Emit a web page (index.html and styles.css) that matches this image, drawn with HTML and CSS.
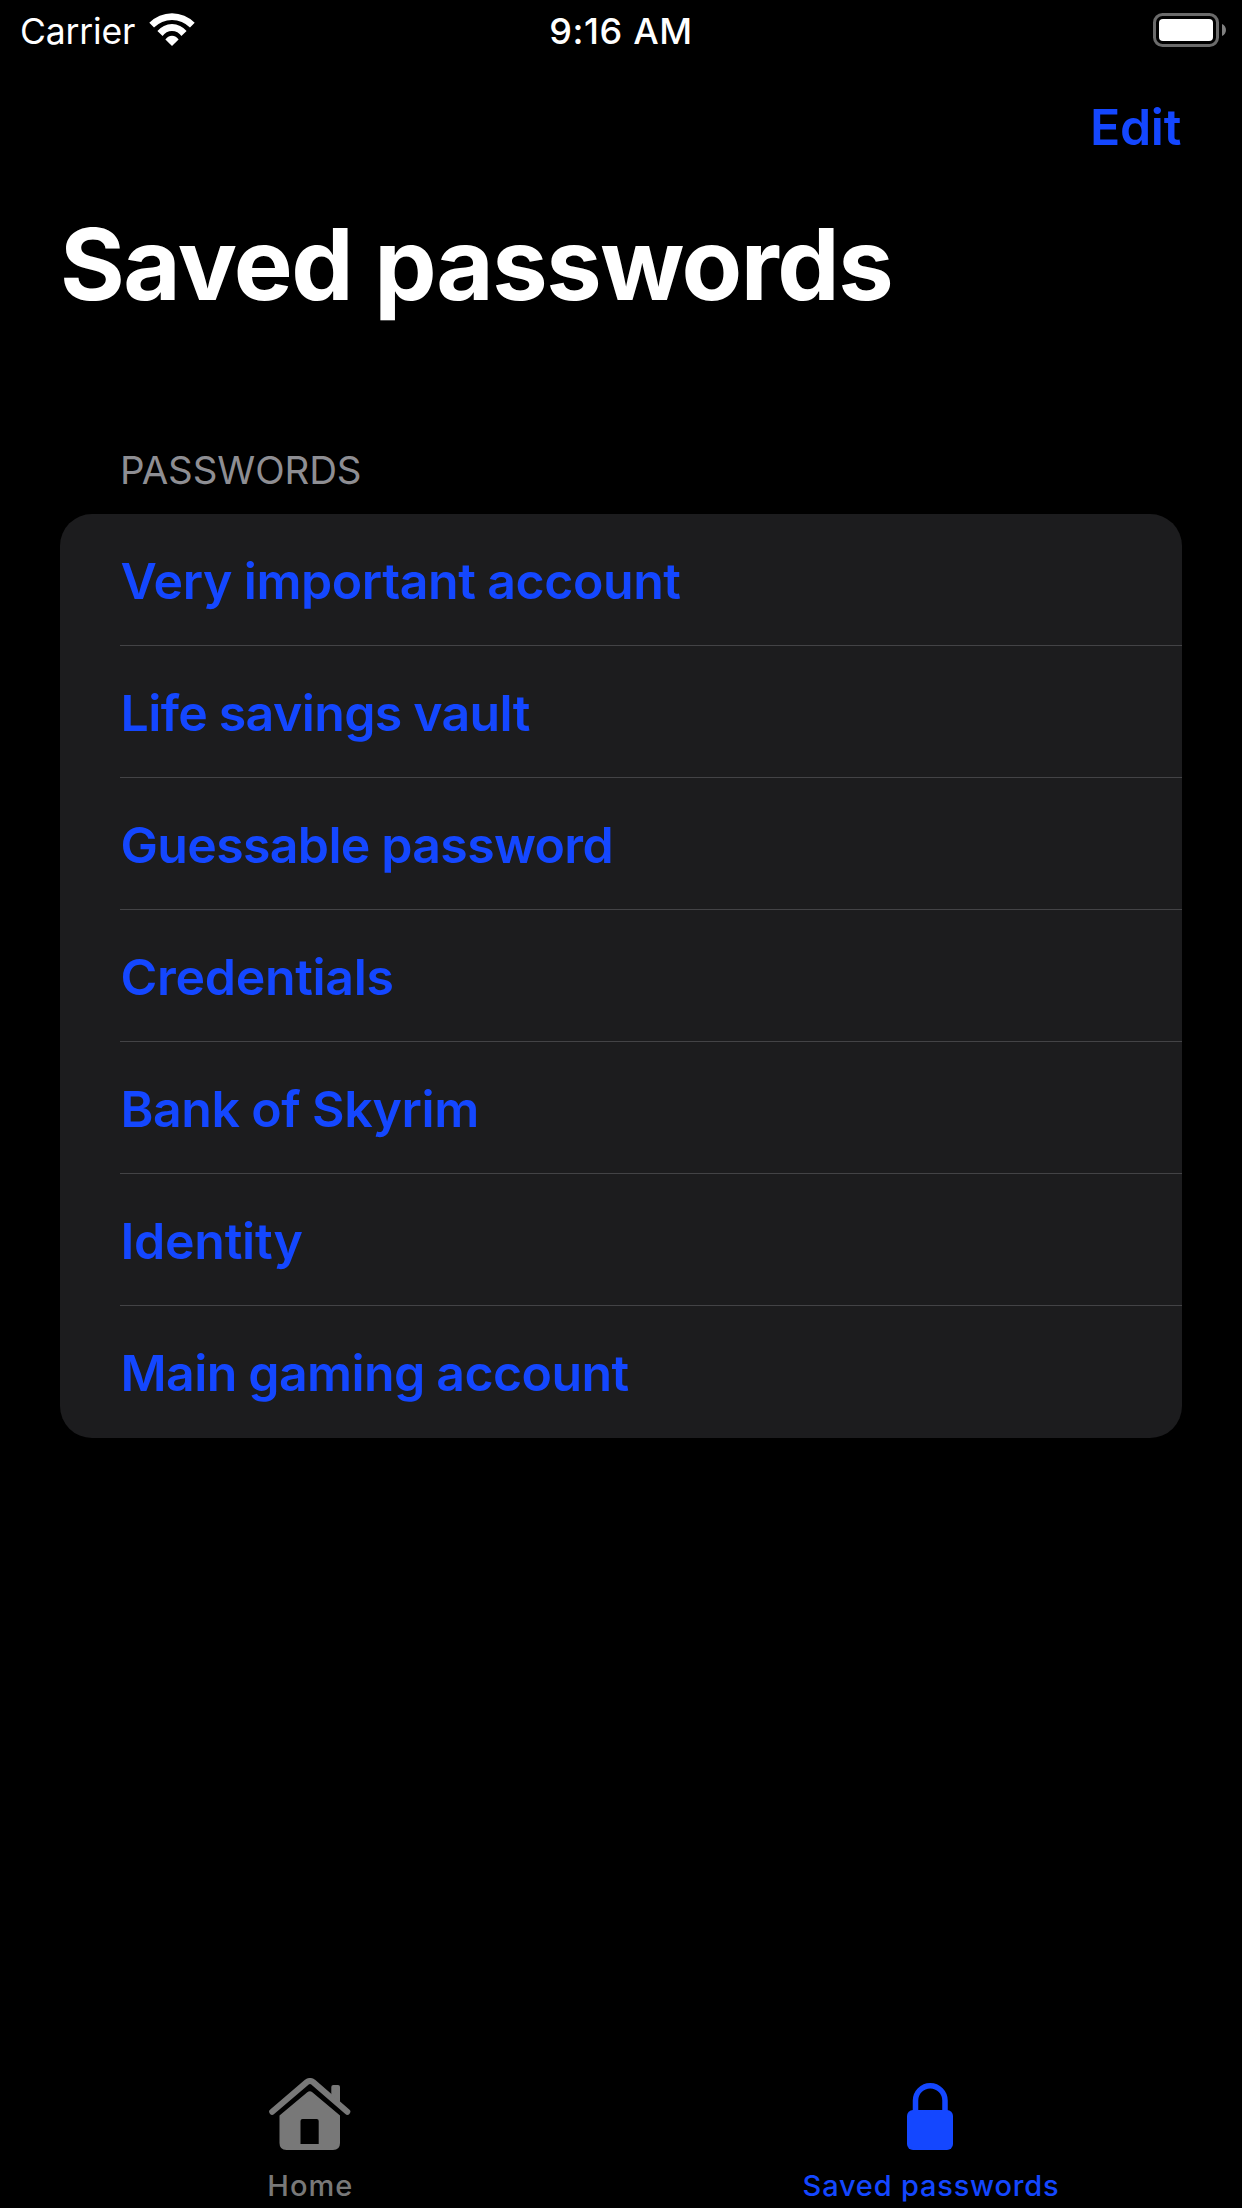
FILE: index.html
```html
<!DOCTYPE html>
<html lang="en">
<head>
<meta charset="utf-8">
<title>Saved passwords</title>
<link rel="stylesheet" href="styles.css">
</head>
<body>
<div class="screen">
  <header class="status">
    <div class="status-left">
      <span class="carrier">Carrier</span>
      <svg class="wifi" width="46" height="34" viewBox="0 0 46 34" fill="#fff">
        <path d="M0.3 9.8A31.6 31.6 0 0 1 45.7 9.8L41 14.500A25.300 25.300 0 0 0 5 14.500Z"/>
        <path d="M8.400 18A18.900 18.900 0 0 1 37.600 18L32.400 23.100A11.100 11.100 0 0 0 13.600 23.100Z"/>
        <path d="M16.400 26.400A7.900 7.900 0 0 1 29.600 26.400L23 33Z"/>
      </svg>
    </div>
    <span class="clock">9:16 AM</span>
    <div class="status-right">
      <svg class="battery" width="73" height="34" viewBox="0 0 73 34">
        <rect x="1.5" y="1.5" width="63" height="31" rx="8" fill="none" stroke="#6b6b6b" stroke-width="3"/>
        <rect x="6" y="6" width="54" height="22" rx="4" fill="#fff"/>
        <path d="M69 11C74.300 13 74.300 21 69 23Z" fill="#808080"/>
      </svg>
    </div>
  </header>
  <nav class="navbar"><a class="edit">Edit</a></nav>
  <h1 class="title">Saved passwords</h1>
  <main class="section">
    <h2 class="section-header">PASSWORDS</h2>
    <ul class="list">
      <li class="row r1"><span>Very important account</span></li>
      <li class="row r2"><span>Life savings vault</span></li>
      <li class="row r3"><span>Guessable password</span></li>
      <li class="row r4"><span>Credentials</span></li>
      <li class="row r5"><span>Bank of Skyrim</span></li>
      <li class="row r6"><span>Identity</span></li>
      <li class="row r7"><span>Main gaming account</span></li>
    </ul>
  </main>
  <footer class="tabs">
    <div class="tab">
      <svg class="icon" width="82" height="74" viewBox="0 0 82 74">
        <path d="M62.300 22V9Q62.300 7 64.300 7H69Q71 7 71 9V29Z" fill="#787878"/>
        <path d="M3.200 33.700L37.800 4.200Q41 1.800 44.200 4.200L78.300 33.700" fill="none" stroke="#787878" stroke-width="6" stroke-linecap="round"/>
        <path d="M38.300 14.300Q40.800 12 43.300 14.300L71 37.500V65Q71 72 64 72H17.500Q10.500 72 10.500 65V37.500ZM31.500 66H49.700V43Q49.700 41 47.700 41H33.500Q31.500 41 31.500 43Z" fill="#787878" fill-rule="evenodd"/>
      </svg>
      <span class="tab-label home">Home</span>
    </div>
    <div class="tab active">
      <svg class="icon" width="46" height="74" viewBox="0 0 46 74">
        <path d="M8.500 36V22.500A14.750 14.750 0 0 1 38 22.500V36" fill="none" stroke="#1447ff" stroke-width="5.500"/>
        <rect y="32" width="46" height="40" rx="6" fill="#1447ff"/>
      </svg>
      <span class="tab-label saved">Saved passwords</span>
    </div>
  </footer>
</div>
</body>
</html>
```
FILE: styles.css
```css
* { box-sizing: border-box; margin: 0; padding: 0; }
body { background: #000; font-family: Inter, "Liberation Sans", sans-serif; font-optical-sizing: none; color: #fff; }
.screen { width: 1242px; height: 2208px; display: flex; flex-direction: column; overflow: hidden; }
svg { display: block; flex: none; }
span, a, h1, h2 { white-space: nowrap; }
.status { height: 60px; display: grid; grid-template-columns: 1fr auto 1fr; line-height: 60px; font-size: 35.500px; }
.status-left { display: flex; padding-left: 20px; gap: 14px; }
.carrier { letter-spacing: -0.15px; height: 60px; padding-top: 2px; }
.wifi { margin-top: 13px; }
.clock { font-weight: 500; font-size: 36px; letter-spacing: 0.65px; padding-top: 1px; height: 60px; }
.status-right { display: flex; justify-content: flex-end; padding: 13px 16px 0 0; }
.navbar { height: 132px; display: flex; justify-content: flex-end; padding-right: 61px; }
.edit { font-size: 50px; font-weight: 600; line-height: 134px; letter-spacing: -0.3px; color: #1447ff; }
.title { height: 140px; padding-left: 60px; font-size: 99px; line-height: 144px; font-weight: 700; letter-spacing: -1.450px; }
.section { padding: 108px 60px 0; flex: 1; }
.section-header { height: 74px; padding-left: 60px; font-size: 38.500px; line-height: 60px; font-weight: 400; letter-spacing: -0.1px; color: #8e8e93; }
.list { list-style: none; background: #1c1c1e; border-radius: 32px; overflow: hidden; }
.row { height: 132px; padding-left: 60px; display: flex; }
.row span { flex: 1; border-bottom: 1px solid #434346; font-size: 50px; line-height: 134px; font-weight: 600; word-spacing: -0.5px; text-indent: 0.5px; color: #1447ff; }
.row:last-child span { border-bottom: 0; }
.r1 { letter-spacing: -0.4px; }
.r2 { letter-spacing: -0.6px; }
.r3 { letter-spacing: -0.65px; }
.r4 { letter-spacing: -0.3px; }
.r5 { letter-spacing: -0.4px; }
.r6 { letter-spacing: -0.25px; }
.r7 { letter-spacing: -0.57px; }
.tabs { height: 132px; display: grid; grid-template-columns: 1fr 1fr; }
.tab { display: flex; flex-direction: column; align-items: center; padding: 2px 2px 0 0; color: #787878; font-size: 29px; line-height: 36px; font-weight: 500; letter-spacing: 1px; }
.tab.active { color: #1447ff; padding-right: 3px; letter-spacing: 0.8px; }
.tab-label { margin-top: 16px; }
.home { margin-left: 1.5px; }
.saved { margin-left: 2px; }
```
